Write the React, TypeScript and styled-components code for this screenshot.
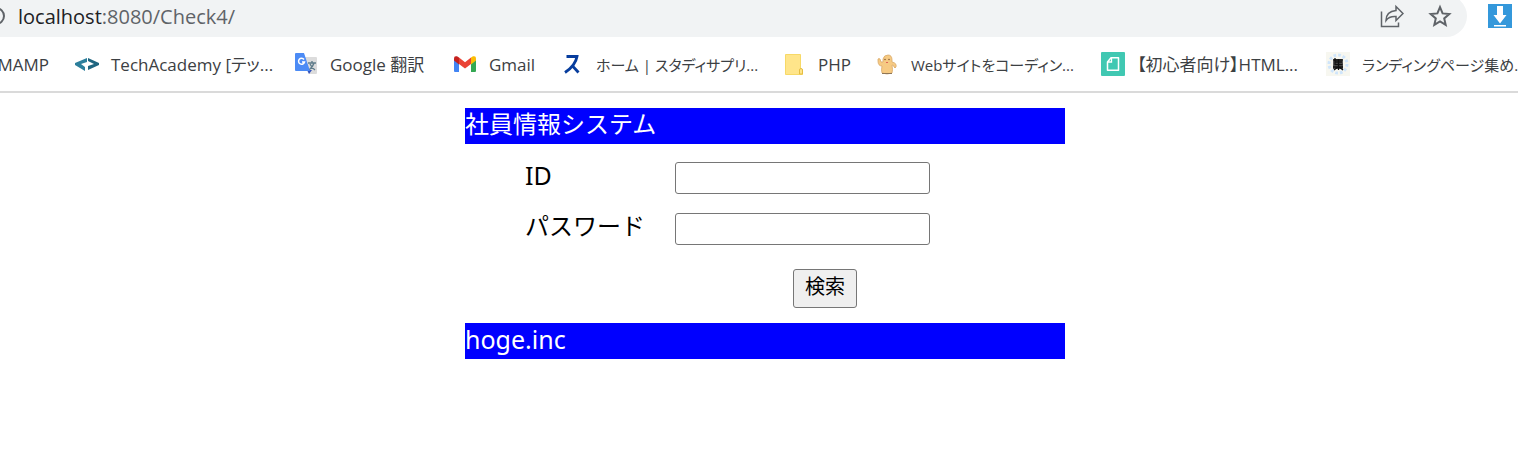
import React from "react";
import styled, { createGlobalStyle } from "styled-components";

const GlobalStyle = createGlobalStyle`
  * { box-sizing: border-box; }
  body {
    margin: 0;
    background: #fff;
    overflow: hidden;
  }
`;

const Toolbar = styled.header`
  display: flex;
  align-items: flex-start;
  padding-right: 6px;
  overflow: hidden;
  font-family: "Open Sans", "Noto Sans CJK JP", sans-serif;
`;

const AddressBar = styled.div`
  display: flex;
  flex: 1;
  align-items: center;
  height: 42px;
  margin: -5px 21px 0 0;
  padding-right: 15px;
  border-radius: 0 21px 21px 0;
  background: #f1f3f4;
`;

const Address = styled.div`
  flex: 1;
  margin-left: 12px;
  padding-top: 2px;
  font-size: 20px;
  line-height: 28px;
  color: #5f6368;
`;

const Host = styled.span`
  color: #202124;
`;

const IconButton = styled.button`
  display: flex;
  width: 24px;
  height: 24px;
  margin-left: 24px;
  padding: 0;
  border: 0;
  background: none;
`;

const ExtensionButton = styled(IconButton)`
  margin: 4px 0 0;
`;

const Bookmarks = styled.nav`
  display: flex;
  align-items: center;
  height: 56px;
  border-bottom: 2px solid #dadada;
  overflow: hidden;
  font-family: "Open Sans", "Noto Sans CJK JP", sans-serif;
  line-height: 28px;
  font-feature-settings: "palt";
`;

const Bookmark = styled.a<{ $width: number; $small?: boolean }>`
  display: flex;
  flex: 0 0 ${(p) => p.$width}px;
  align-items: center;
  gap: 12px;
  min-width: 0;
  font-size: ${(p) => (p.$small ? 15 : 17)}px;
  color: #3c4043;
  text-decoration: none;
  white-space: nowrap;

  svg { flex: none; }
`;

const FirstBookmark = styled(Bookmark)`
  justify-content: flex-end;
  padding-right: 26px;
`;

const BookmarkLabel = styled.span`
  padding-top: 2px;
`;

const Page = styled.main`
  padding: 15px 0 0 12px;
  font-family: "Noto Sans", "Noto Sans CJK JP", sans-serif;
  font-size: 24px;
  line-height: 36px;
`;

const Panel = styled.div`
  max-width: 600px;
  margin: 0 auto;
`;

const Banner = styled.div`
  height: 36px;
  line-height: 32px;
  background: #00f;
  color: #fff;
`;

const Latin = styled.span`
  font-size: 25px;
`;

const Form = styled.form`
  display: flex;
  flex-direction: column;
  gap: 15px;
  padding: 15px 60px;
`;

const Field = styled.div`
  display: flex;
  align-items: center;
  height: 36px;
`;

const Label = styled.label`
  width: 150px;
  line-height: 32px;
  padding-bottom: 4px;
`;

const TextBox = styled.input`
  width: 255px;
  height: 32px;
  margin-top: 2px;
  padding: 2px 4px;
  border: 1px solid #767676;
  border-radius: 3px;
  background: #fff;
  font: inherit;
  font-size: 20px;
`;

const Actions = styled.div`
  display: flex;
  justify-content: center;
  padding: 8px 0 0 120px;
`;

const SearchButton = styled.button`
  width: 64px;
  height: 39px;
  padding: 0 0 4px;
  border: 1px solid #767676;
  border-radius: 3px;
  background: #efefef;
  color: #000;
  font: inherit;
  font-size: 20px;
  line-height: 30px;
`;

const Svg = ({ children }: { children: React.ReactNode }) => (
  <svg width={24} height={24} viewBox="0 0 24 24" fill="none" aria-hidden="true">
    {children}
  </svg>
);

const TechIcon = () => (
  <Svg>
    <path d="M12 6v4l-6 2 4 3v4L0 13v-2z" fill="#2c7f9c" />
    <path d="M13 6l11 5v2l-11 5v-4l6-2-6-3z" fill="#1f6580" />
  </Svg>
);

const TranslateIcon = () => (
  <Svg>
    <path d="M10 5h12q1 0 1 1v15q0 1-1 1h-7z" fill="#dcdcdc" />
    <path d="M13 18h5l-3 4z" fill="#3453bd" />
    <path d="M14 11h8M18 9v2M20 11q-1 4-5 7M16 12q2 4 5 6" stroke="#607d8b" strokeWidth="1.4" />
    <path d="M2 1h8l6 18H2q-1 0-1-1V2q0-1 1-1z" fill="#4c8bf5" />
    <path d="M10 7.500A3 3 0 1 0 10.500 10H8" stroke="#fff" strokeWidth="1.500" />
  </Svg>
);

const GmailIcon = () => (
  <Svg>
    <path d="M1 7l5 4v9H2q-1 0-1-1z" fill="#4285f4" />
    <path d="M18 11l5-4v12q0 1-1 1h-4z" fill="#34a853" />
    <path d="M18 5.500l2-1.200q3-.8 3 2.200v2l-5 4z" fill="#fbbc04" />
    <path d="M6 5.500l6 4.700 6-4.700v6.500l-6 4.500-6-4.500z" fill="#ea4335" />
    <path d="M1 6.500q0-3 3-2.200l2 1.200v7L1 8.500z" fill="#c5221f" />
  </Svg>
);

const StudyIcon = () => (
  <Svg>
    <path d="M6.500 4.500H17q-1.500 9-12 16M11.500 13q3 3 7 7.500" stroke="#073d9d" strokeWidth="2.800" />
  </Svg>
);

const FolderIcon = () => (
  <Svg>
    <path d="M3.500 2.500h15v15h2v5h-17z" fill="#ffe58a" stroke="#f7d967" />
    <path d="M17.500 22v-4q0-1.500 1.500-1.500t1.500 1.500v4z" fill="#ffe58a" stroke="#e5bd43" />
  </Svg>
);

const MascotIcon = () => (
  <Svg>
    <path
      d="M7 21q-1-3 0-7-4 0-4-5V7q1-1 2 0l1 3h2V7q1-4 5-4t4 5v2q5 1 4 5-1 2-2 0 0-2-2-2 1 5 0 8-5 2-10 0z"
      fill="#f6ca83"
      stroke="#d9a969"
      strokeWidth=".8"
    />
    <path d="M7 21.500h10" stroke="#8f7656" />
    <circle cx="10" cy="7.500" r=".8" fill="#886039" />
    <circle cx="14" cy="7.500" r=".8" fill="#886039" />
    <path d="M11 10h2v1h-2z" fill="#df6659" />
  </Svg>
);

const NoteIcon = () => (
  <Svg>
    <rect width="24" height="24" rx="1" fill="#40c8b2" />
    <path d="M10 5.800h7.500v12.500h-11V10z" stroke="#fff" strokeWidth="1.500" strokeLinejoin="round" />
    <path d="M10.500 6v4H7" stroke="#fff" strokeWidth="1.300" />
  </Svg>
);

const CollectionIcon = () => (
  <Svg>
    <path d="M0 0h24v24H0z" fill="#f7f7f0" />
    <circle cx="12" cy="12" r="9" stroke="#cfe5fb" strokeWidth="3" strokeDasharray="2.700 2" />
    <path d="M7 7h10v10H7z" fill="#555" />
    <path d="M9 6v7M7.500 8h9M9 10h7M8.500 12.500h8M7 15h10M12.500 7v11M12 15l-4 3M13 15l4 3" stroke="#111" strokeWidth="1.300" />
  </Svg>
);

const bookmarks = [
  { label: "TechAcademy [テッ...", width: 219, Icon: TechIcon },
  { label: "Google 翻訳", width: 159, Icon: TranslateIcon },
  { label: "Gmail", width: 107, Icon: GmailIcon },
  { label: "ホーム | スタディサプリ...", width: 222, Icon: StudyIcon, small: true },
  { label: "PHP", width: 93, Icon: FolderIcon },
  { label: "Webサイトをコーディン...", width: 226, Icon: MascotIcon, small: true },
  { label: "【初心者向け】HTML...", width: 225, Icon: NoteIcon },
  { label: "ランディングページ集め...", width: 192, Icon: CollectionIcon, small: true },
];

export default function App() {
  return (
    <>
      <GlobalStyle />
      <Toolbar>
        <AddressBar>
          <svg width="6" height="20" viewBox="0 0 6 20" fill="none" aria-hidden="true">
            <circle cx="-4" cy="10" r="8" stroke="#5f6368" strokeWidth="2" />
          </svg>
          <Address>
            <Host>localhost</Host>:8080/Check4/
          </Address>
          <IconButton type="button" aria-label="共有">
            <Svg>
              <path d="M1.500 7.500v15h17v-4" stroke="#5f6368" strokeWidth="1.500" />
              <path
                d="M16 2.500l7 7-7 7v-4q-7-.5-10 4 0-9 10-10z"
                stroke="#5f6368"
                strokeWidth="1.500"
              />
            </Svg>
          </IconButton>
          <IconButton type="button" aria-label="ブックマーク">
            <Svg>
              <path
                d="M12 3.200l2.600 6.200 6.700.6-5.100 4.400 1.500 6.500-5.700-3.400-5.700 3.400 1.500-6.500L2.700 10l6.700-.6z"
                stroke="#5f6368"
                strokeWidth="2"
              />
            </Svg>
          </IconButton>
        </AddressBar>
        <ExtensionButton type="button" aria-label="ダウンロード">
          <Svg>
            <path d="M0 0h24v24H0z" fill="#3498db" />
            <path d="M9 2h6v9h3.500L12 19.500 5.500 11H9zM6 21h12v1.500H6z" fill="#fff" />
          </Svg>
        </ExtensionButton>
      </Toolbar>
      <Bookmarks>
        <FirstBookmark href="#" $width={75}>
          <BookmarkLabel>MAMP</BookmarkLabel>
        </FirstBookmark>
        {bookmarks.map(({ label, width, Icon, small }) => (
          <Bookmark href="#" key={label} $width={width} $small={small}>
            <Icon />
            <BookmarkLabel>{label}</BookmarkLabel>
          </Bookmark>
        ))}
      </Bookmarks>
      <Page>
        <Panel>
          <Banner>社員情報システム</Banner>
          <Form onSubmit={(e) => e.preventDefault()}>
            <Field>
              <Label htmlFor="user-id">
                <Latin>ID</Latin>
              </Label>
              <TextBox id="user-id" type="text" />
            </Field>
            <Field>
              <Label htmlFor="password">パスワード</Label>
              <TextBox id="password" type="password" />
            </Field>
            <Actions>
              <SearchButton type="submit">検索</SearchButton>
            </Actions>
          </Form>
          <Banner>
            <Latin>hoge.inc</Latin>
          </Banner>
        </Panel>
      </Page>
    </>
  );
}
